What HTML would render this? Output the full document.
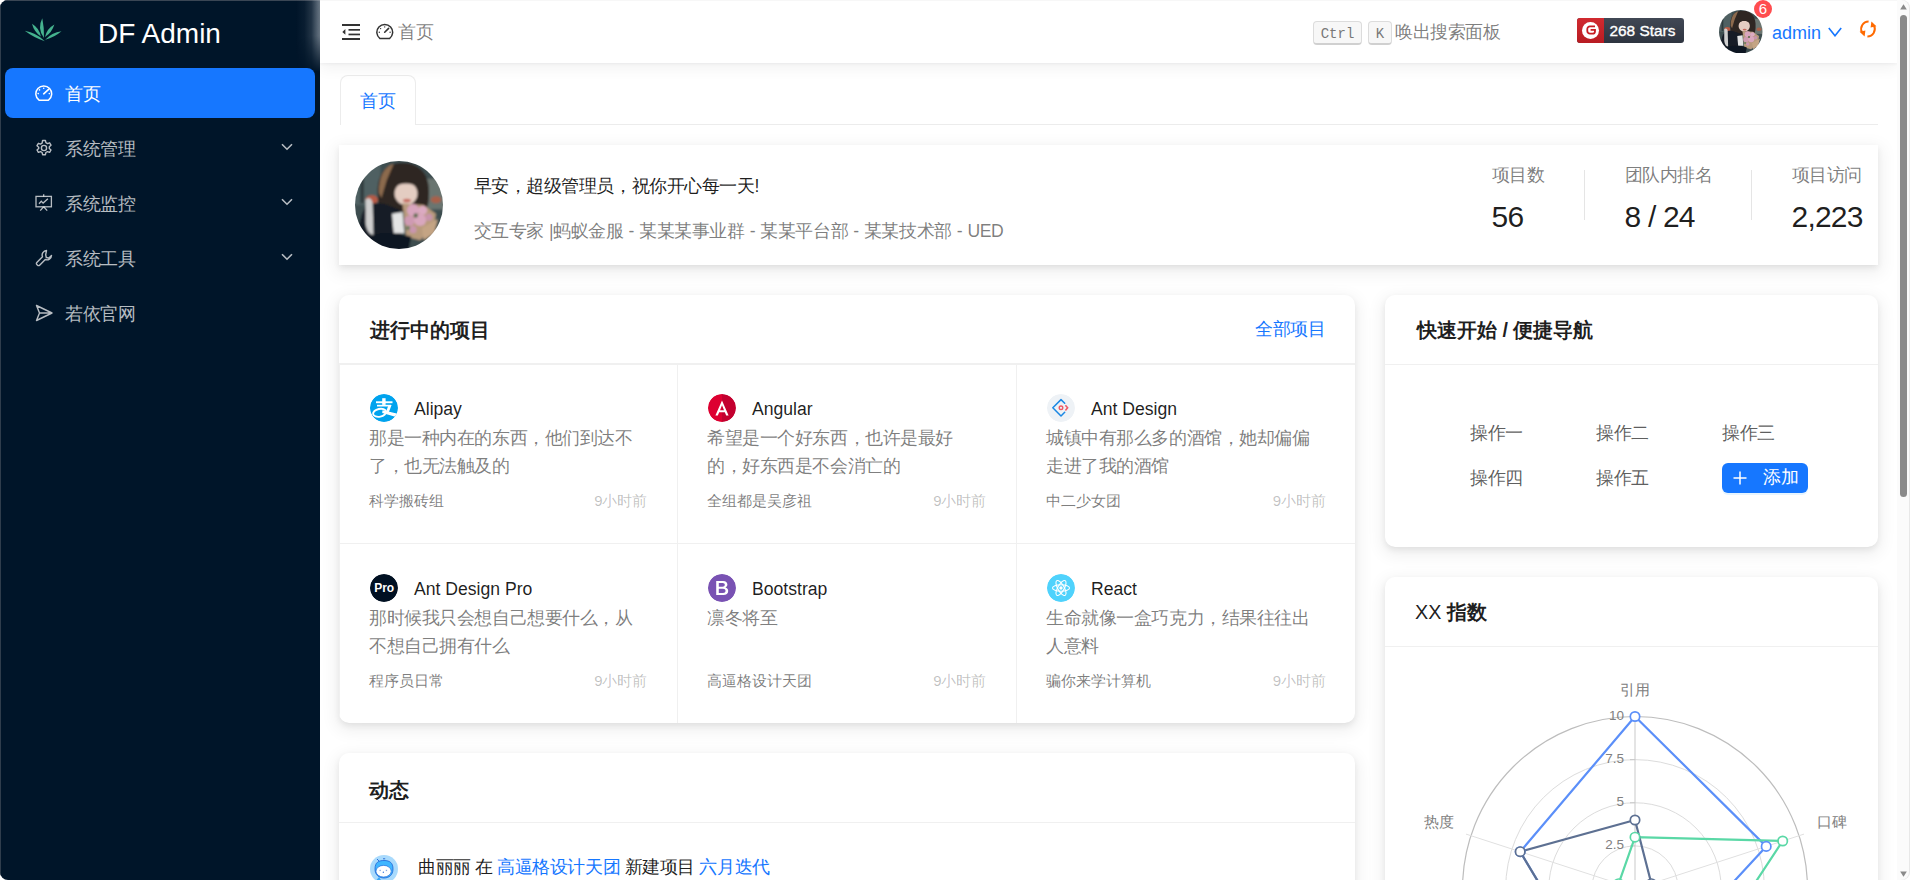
<!DOCTYPE html>
<html><head><meta charset="utf-8">
<style>
*{box-sizing:border-box;margin:0;padding:0}
html,body{width:1910px;height:880px;overflow:hidden;background:#fff}
body{position:relative;font-family:"Liberation Sans",sans-serif;color:rgba(0,0,0,.88)}
.a{position:absolute;white-space:nowrap;line-height:1}
#sb .a{position:absolute}
#side{position:absolute;left:0;top:0;width:320px;height:880px;background:#001529;border-radius:8px 0 0 8px;overflow:hidden}
#side .edge{position:absolute;left:0;top:0;width:1px;height:880px;background:#2f3d4c}
#side .tedge{position:absolute;left:0;top:0;width:320px;height:1px;background:#3a4654}
#side .topg{position:absolute;left:296px;top:0;width:24px;height:72px;background:linear-gradient(90deg,rgba(160,170,180,0) 0%,rgba(160,170,180,.06) 35%,rgba(160,170,180,.22) 65%,rgba(175,185,195,.62) 100%);-webkit-mask-image:linear-gradient(180deg,#000 0,#000 50%,transparent 100%)}
.mi{position:absolute;left:5px;width:310px;height:50px;border-radius:8px}
.mi.sel{background:#1677ff}
.mi .t{position:absolute;left:60px;top:18px;font-size:17.6px;letter-spacing:-.43px;line-height:1;color:rgba(255,255,255,.72)}
.mi.sel .t{color:#fff}
.mi svg.ic{position:absolute;left:30px;top:16px}
.mi svg.ch{position:absolute;left:276px;top:20px}
#main{position:absolute;left:320px;top:0;width:1577px;height:880px;background:#fff}
#hdr{position:absolute;left:320px;top:0;width:1577px;height:62.7px;background:#fff;box-shadow:0 1px 3px rgba(0,21,41,.05),0 6px 14px rgba(0,0,0,.05);z-index:2}
#sb{position:absolute;left:1897px;top:0;width:13px;height:880px;background:#fbfbfb;z-index:3;border-radius:0 8px 8px 0;box-shadow:inset -1px 0 0 #e8e8e8}
.card{position:absolute;background:#fff;border-radius:10px;box-shadow:0 1px 2px -2px rgba(0,0,0,.14),0 3px 6px 0 rgba(0,0,0,.07),0 5px 16px 4px rgba(0,0,0,.06)}
.ct{position:absolute;font-size:19.8px;font-weight:bold;line-height:1;color:rgba(0,0,0,.88);white-space:nowrap}
.sep{position:absolute;left:0;right:0;height:1px;background:#f0f0f0}
.gc{position:absolute;width:338.5px;height:180px}
.gc .ico{position:absolute;left:30px;top:30px;width:28px;height:28px;border-radius:50%;overflow:hidden}
.gc .nm{position:absolute;left:74px;top:37px;font-size:17.6px;line-height:1;color:rgba(0,0,0,.88);white-space:nowrap}
.gc .ds{position:absolute;left:29px;top:60px;width:278px;font-size:17.6px;letter-spacing:-.43px;line-height:28px;color:rgba(0,0,0,.52);white-space:normal}
.gc .ft{position:absolute;left:29px;top:128.5px;font-size:15px;line-height:1;color:rgba(0,0,0,.52);white-space:nowrap}
.gc .tm{position:absolute;right:30px;top:128.5px;font-size:15px;line-height:1;color:rgba(0,0,0,.25);white-space:nowrap}
.qa{position:absolute;font-size:17.6px;letter-spacing:-.43px;line-height:1;margin-top:1px;color:rgba(0,0,0,.65);white-space:nowrap}
.kbd{font-family:"Liberation Mono",monospace;font-size:14px;color:#777;background:#f7f7f7;border:1px solid #dcdcdc;border-bottom:2px solid #d0d0d0;border-radius:4px;text-align:center;line-height:25px}
.av{border-radius:50%;overflow:hidden;background:radial-gradient(circle at 50% 38%,#d9c3b8 0,#b59a8c 12%,#3a3330 26%,#2a2f30 45%,#26383c 70%,#2b3c40 100%)}
</style></head><body>
<div id="main"></div>
<svg width="0" height="0" style="position:absolute">
<defs>
<filter id="bl" x="-10%" y="-10%" width="120%" height="120%"><feGaussianBlur stdDeviation="1.3"/></filter>
<clipPath id="cc"><circle cx="50" cy="50" r="50"/></clipPath>

</defs></svg>

<!-- SIDEBAR -->
<div id="side">
  <div class="edge"></div><div class="tedge"></div>
  <div class="topg"></div>
  <svg class="a" style="left:24px;top:17px" width="38" height="26" viewBox="0 0 38 26"><g fill="#45b38f"><path d="M20.0 21.0 Q20.3 11.0 18.3 1.2 Q12.8 11.6 20.0 21.0Z"/><path d="M16.8 19.5 Q15.3 11.2 8.0 6.8 Q10.0 14.8 16.8 19.5Z"/><path d="M21.0 20.0 Q28.0 15.6 30.4 7.6 Q22.9 11.7 21.0 20.0Z"/><path d="M20.8 24.2 Q12.5 15.8 0.8 13.8 Q9.9 20.8 20.8 24.2Z"/><path d="M21.2 22.8 Q30.3 20.3 37.5 14.2 Q27.7 15.3 21.2 22.8Z"/></g></svg>
  <div class="a" style="left:98px;top:20px;font-size:28px;color:#fff">DF Admin</div>

  <div class="mi sel" style="top:68px">
    <svg class="ic" style="top:17px" width="18" height="18" viewBox="0 0 18 18" fill="none" stroke="#fff" stroke-width="1.5"><path d="M4 15.2 A7.9 7.9 0 1 1 13.5 15.2 Z" stroke-linejoin="round"/><path d="M8.7 8.8 L13.6 4.4" stroke-linecap="round" stroke-width="1.6"/><circle cx="4.5" cy="4.9" r=".8" fill="#fff" stroke="none"/><circle cx="8.7" cy="3.3" r=".8" fill="#fff" stroke="none"/><circle cx="3.2" cy="8.6" r=".8" fill="#fff" stroke="none"/><circle cx="14.3" cy="8.6" r=".8" fill="#fff" stroke="none"/></svg>
    <div class="t">首页</div>
  </div>
  <div class="mi" style="top:123px">
    <svg class="ic" width="18" height="18" viewBox="0 0 18 18" fill="none" stroke="rgba(255,255,255,.72)" stroke-width="1.4"><path d="M7.6 1.5h2.8l.5 2.2 1.6.9 2.1-.8 1.4 2.4-1.7 1.5v1.8l1.7 1.5-1.4 2.4-2.1-.8-1.6.9-.5 2.2H7.6l-.5-2.2-1.6-.9-2.1.8-1.4-2.4 1.7-1.5V8.2L2 6.7l1.4-2.4 2.1.8 1.6-.9z" stroke-linejoin="round"/><circle cx="9" cy="9" r="2.6"/></svg>
    <div class="t">系统管理</div>
    <svg class="ch" width="12" height="8" viewBox="0 0 12 8" fill="none" stroke="rgba(255,255,255,.72)" stroke-width="1.6"><path d="M1 1.2 L6 6.2 L11 1.2"/></svg>
  </div>
  <div class="mi" style="top:178px">
    <svg class="ic" style="top:16px" width="18" height="18" viewBox="0 0 18 18" fill="none" stroke="rgba(255,255,255,.72)" stroke-width="1.3"><rect x="1" y="2.4" width="15.4" height="10.4"/><path d="M8.7 0.2v2.2M8.7 12.8L5.2 16.6M8.7 12.8l3.5 3.8M4 9.8l2.3-2.5 1.8 1.8 4.8-4.3"/></svg>
    <div class="t">系统监控</div>
    <svg class="ch" width="12" height="8" viewBox="0 0 12 8" fill="none" stroke="rgba(255,255,255,.72)" stroke-width="1.6"><path d="M1 1.2 L6 6.2 L11 1.2"/></svg>
  </div>
  <div class="mi" style="top:233px">
    <svg class="ic" width="18" height="18" viewBox="0 0 18 18" fill="none" stroke="rgba(255,255,255,.72)" stroke-width="1.4"><path d="M11.5 1.5a4.5 4.5 0 0 0-4 6.2L1.8 13.4a1.4 1.4 0 0 0 0 2l.8.8a1.4 1.4 0 0 0 2 0l5.7-5.7a4.5 4.5 0 0 0 6.2-4l-2.6 2.6-2.6-.6-.6-2.6z" stroke-linejoin="round"/></svg>
    <div class="t">系统工具</div>
    <svg class="ch" width="12" height="8" viewBox="0 0 12 8" fill="none" stroke="rgba(255,255,255,.72)" stroke-width="1.6"><path d="M1 1.2 L6 6.2 L11 1.2"/></svg>
  </div>
  <div class="mi" style="top:288px">
    <svg class="ic" width="18" height="18" viewBox="0 0 18 18" fill="none" stroke="rgba(255,255,255,.72)" stroke-width="1.4"><path d="M1.5 1.5 L17 9 L1.5 16.5 L4.5 9 Z M4.5 9 H17" stroke-linejoin="round"/></svg>
    <div class="t">若依官网</div>
  </div>
</div>

<!-- HEADER -->
<div id="hdr"><div class="a" style="left:0;top:0;width:1577px;height:1px;background:#f7f7f7"></div>
  <svg class="a" style="left:22px;top:24px" width="18" height="16" viewBox="0 0 18 16"><g fill="#333"><rect x="0" y="0" width="18" height="2"/><rect x="6.5" y="5" width="11.5" height="1.7"/><rect x="6.5" y="9.6" width="11.5" height="1.7"/><rect x="0" y="14" width="18" height="2"/><path d="M0.3 7.9 L3.4 5 L3.4 10.8 Z"/></g></svg>
  <svg class="a" style="left:56px;top:23px" width="18" height="18" viewBox="0 0 18 18" fill="none" stroke="#333" stroke-width="1.5"><path d="M4 15.6 A7.9 7.9 0 1 1 13.5 15.6 Z" stroke-linejoin="round"/><path d="M8.7 9.2 L12.6 5.4" stroke-linecap="round" stroke-width="1.6"/><circle cx="4.6" cy="5.6" r=".7" fill="#333" stroke="none"/><circle cx="8.7" cy="3.9" r=".7" fill="#333" stroke="none"/><circle cx="3.3" cy="9.2" r=".7" fill="#333" stroke="none"/><circle cx="14.1" cy="9.2" r=".7" fill="#333" stroke="none"/></svg>
  <div class="a" style="left:78px;top:24px;font-size:17.6px;letter-spacing:-.43px;color:rgba(0,0,0,.52)">首页</div>

  <div class="a kbd" style="left:993px;top:21px;width:49px;height:24px">Ctrl</div>
  <div class="a kbd" style="left:1048px;top:21px;width:24px;height:24px">K</div>
  <div class="a" style="left:1075px;top:24px;font-size:17.6px;letter-spacing:-.43px;color:rgba(0,0,0,.52)">唤出搜索面板</div>

  <div class="a" style="left:1257px;top:18px;width:107px;height:24.5px;border-radius:3px;overflow:hidden;background:linear-gradient(#414855,#2e3440)">
    <div style="position:absolute;left:0;top:0;width:27px;height:100%;background:linear-gradient(#d12a30,#b81c22)"></div>
    <div style="position:absolute;left:5px;top:3.6px;width:17.2px;height:17.2px;border-radius:50%;background:#fff"></div>
    <svg style="position:absolute;left:8.5px;top:7px" width="10" height="10" viewBox="0 0 10 10"><path d="M9 1.3 H4 A2.7 2.7 0 0 0 1.3 4 V6 A2.7 2.7 0 0 0 4 8.7 H6.5 A2.5 2.5 0 0 0 9 6.2 V4.8 H4.6" fill="none" stroke="#c71d23" stroke-width="1.8"/></svg>
    <div style="position:absolute;left:32.5px;top:5px;font-size:15.4px;line-height:1;-webkit-text-stroke:.35px #fff;color:#fff;white-space:nowrap">268 Stars</div>
  </div>

  <svg class="a" style="left:1399px;top:9.5px" width="43.5" height="43.5" viewBox="0 0 100 100">
<g clip-path="url(#cc)"><g filter="url(#bl)">
<rect x="-5" y="-5" width="110" height="110" fill="#3c4d50"/>
<rect x="-5" y="-5" width="34" height="55" fill="#4f6062"/>
<rect x="6" y="8" width="4" height="40" fill="#2e3a3c"/>
<rect x="80" y="20" width="25" height="35" fill="#6a7470"/>
<ellipse cx="19" cy="44" rx="7" ry="5" fill="#b85a44"/>
<ellipse cx="92" cy="44" rx="6" ry="4" fill="#a86048"/>
<path d="M26 40 C24 15 36 2 54 2 C74 2 86 16 84 40 C84 52 80 58 74 58 L34 58 C28 56 26 50 26 40Z" fill="#2f2623"/>
<path d="M27 36 C27 18 33 6 44 3 L36 22 L30 42 Z" fill="#8c6a4e"/>
<ellipse cx="58" cy="37" rx="13" ry="13" fill="#e4cdc2"/>
<path d="M42 28 C46 18 66 16 74 26 L72 30 C64 24 52 24 44 30 Z" fill="#2f2623"/>
<ellipse cx="59" cy="45" rx="4.5" ry="2" fill="#c6685c"/>
<path d="M8 60 C14 44 30 46 42 52 L52 56 L54 100 L-5 105 Z" fill="#151c26"/>
<path d="M12 44 C15 41 19 42 20 48 L21 84 C17 84 13 80 12 70 Z" fill="#cfcfcf"/>
<path d="M42 60 L54 58 L56 82 L44 82 Z" fill="#e4e4e4"/>
<path d="M54 48 L78 50 L92 60 L90 74 L74 90 L58 86 Z" fill="#b89a7c"/>
<circle cx="66" cy="56" r="7" fill="#d8a5bd"/>
<circle cx="77" cy="56" r="5" fill="#dcaac2"/>
<circle cx="62" cy="68" r="6" fill="#cf9ab2"/>
<circle cx="74" cy="67" r="7" fill="#d9a7be"/>
<circle cx="84" cy="64" r="4" fill="#c894ad"/>
<circle cx="66" cy="78" r="4" fill="#c996ae"/>
<circle cx="69" cy="62" r="2.5" fill="#5e6c50"/>
<circle cx="60" cy="76" r="2.5" fill="#6f7e60"/>
<path d="M20 84 C30 80 50 82 64 86 L60 105 L10 105 Z" fill="#111821"/>
<path d="M76 76 L94 66 L90 82 L78 90 Z" fill="#c4a484"/>
</g></g>
</svg>
  <div class="a" style="left:1434px;top:0px;width:18px;height:18px;border-radius:50%;background:#ff4d4f;color:#fff;font-size:15px;line-height:18px;text-align:center;box-shadow:0 0 0 1px #fff">6</div>
  <div class="a" style="left:1452px;top:23.5px;font-size:18px;color:#1677ff">admin</div>
  <svg class="a" style="left:1508px;top:27px" width="14" height="10" viewBox="0 0 14 10" fill="none" stroke="#1677ff" stroke-width="1.6"><path d="M0.8 1 L7 8.8 L13.2 1"/></svg>
  <svg class="a" style="left:1538px;top:19px" width="20" height="20" viewBox="0 0 20 20" fill="none" stroke="#ff6a00" stroke-width="2"><path d="M10.6 2.6 A7.4 7.4 0 0 0 3.9 13.2"/><path d="M9.4 17.4 A7.4 7.4 0 0 0 16.1 6.8"/><path d="M1.6 12.8 L7.4 11.6 L6.6 17.6 Z" fill="#ff6a00" stroke="none"/><path d="M18.4 7.2 L12.6 8.4 L13.4 2.4 Z" fill="#ff6a00" stroke="none"/></svg>
</div>


<!-- TAB -->
<div class="a" style="left:340px;top:124px;width:1538px;height:1px;background:#ececec"></div>
<div class="a" style="left:339.5px;top:75px;width:76.5px;height:50px;background:#fff;border:1px solid #ececec;border-bottom:none;border-radius:8px 8px 0 0"></div>
<div class="a" style="left:360px;top:92.5px;font-size:17.6px;letter-spacing:-.43px;color:#1677ff">首页</div>

<!-- PROFILE CARD -->
<div class="card" style="left:339px;top:145px;width:1539px;height:120px;border-radius:0">
  <svg class="a" style="left:16px;top:15.5px" width="88" height="88" viewBox="0 0 100 100">
<g clip-path="url(#cc)"><g filter="url(#bl)">
<rect x="-5" y="-5" width="110" height="110" fill="#3c4d50"/>
<rect x="-5" y="-5" width="34" height="55" fill="#4f6062"/>
<rect x="6" y="8" width="4" height="40" fill="#2e3a3c"/>
<rect x="80" y="20" width="25" height="35" fill="#6a7470"/>
<ellipse cx="19" cy="44" rx="7" ry="5" fill="#b85a44"/>
<ellipse cx="92" cy="44" rx="6" ry="4" fill="#a86048"/>
<path d="M26 40 C24 15 36 2 54 2 C74 2 86 16 84 40 C84 52 80 58 74 58 L34 58 C28 56 26 50 26 40Z" fill="#2f2623"/>
<path d="M27 36 C27 18 33 6 44 3 L36 22 L30 42 Z" fill="#8c6a4e"/>
<ellipse cx="58" cy="37" rx="13" ry="13" fill="#e4cdc2"/>
<path d="M42 28 C46 18 66 16 74 26 L72 30 C64 24 52 24 44 30 Z" fill="#2f2623"/>
<ellipse cx="59" cy="45" rx="4.5" ry="2" fill="#c6685c"/>
<path d="M8 60 C14 44 30 46 42 52 L52 56 L54 100 L-5 105 Z" fill="#151c26"/>
<path d="M12 44 C15 41 19 42 20 48 L21 84 C17 84 13 80 12 70 Z" fill="#cfcfcf"/>
<path d="M42 60 L54 58 L56 82 L44 82 Z" fill="#e4e4e4"/>
<path d="M54 48 L78 50 L92 60 L90 74 L74 90 L58 86 Z" fill="#b89a7c"/>
<circle cx="66" cy="56" r="7" fill="#d8a5bd"/>
<circle cx="77" cy="56" r="5" fill="#dcaac2"/>
<circle cx="62" cy="68" r="6" fill="#cf9ab2"/>
<circle cx="74" cy="67" r="7" fill="#d9a7be"/>
<circle cx="84" cy="64" r="4" fill="#c894ad"/>
<circle cx="66" cy="78" r="4" fill="#c996ae"/>
<circle cx="69" cy="62" r="2.5" fill="#5e6c50"/>
<circle cx="60" cy="76" r="2.5" fill="#6f7e60"/>
<path d="M20 84 C30 80 50 82 64 86 L60 105 L10 105 Z" fill="#111821"/>
<path d="M76 76 L94 66 L90 82 L78 90 Z" fill="#c4a484"/>
</g></g>
</svg>
  <div class="a" style="left:134.5px;top:33px;font-size:17.6px;letter-spacing:-.43px;color:rgba(0,0,0,.88)">早安，超级管理员，祝你开心每一天!</div>
  <div class="a" style="left:134.5px;top:77.5px;font-size:17.6px;letter-spacing:-.43px;word-spacing:.7px;color:rgba(0,0,0,.52)">交互专家 |蚂蚁金服 - 某某某事业群 - 某某平台部 - 某某技术部 - UED</div>
  <div class="a" style="left:1152.5px;top:22px;font-size:17.6px;letter-spacing:-.43px;color:rgba(0,0,0,.52)">项目数</div>
  <div class="a" style="left:1152.5px;top:57px;font-size:30px;letter-spacing:-.8px;color:rgba(0,0,0,.88)">56</div>
  <div class="a" style="left:1245px;top:25px;width:1px;height:50px;background:#e5e5e5"></div>
  <div class="a" style="left:1285.5px;top:22px;font-size:17.6px;letter-spacing:-.43px;color:rgba(0,0,0,.52)">团队内排名</div>
  <div class="a" style="left:1285.5px;top:57px;font-size:30px;letter-spacing:-.8px;color:rgba(0,0,0,.88)">8 / 24</div>
  <div class="a" style="left:1412px;top:25px;width:1px;height:50px;background:#e5e5e5"></div>
  <div class="a" style="left:1452.5px;top:22px;font-size:17.6px;letter-spacing:-.43px;color:rgba(0,0,0,.52)">项目访问</div>
  <div class="a" style="left:1452.5px;top:57px;font-size:30px;letter-spacing:-.8px;color:rgba(0,0,0,.88)">2,223</div>
</div>


<!-- PROJECT CARD -->
<div class="card" style="left:339px;top:295px;width:1016px;height:428px;overflow:hidden">
  <div class="ct" style="left:31px;top:26px">进行中的项目</div>
  <div class="a" style="left:916px;top:26px;font-size:17.6px;letter-spacing:-.43px;color:#1677ff">全部项目</div>
  <div class="sep" style="top:68px;height:1.6px"></div>
  <div class="gc" style="left:1px;top:69px;width:337.5px"><div class="ico"><svg width="28" height="28" viewBox="0 0 28 28"><defs><clipPath id="alc"><circle cx="14" cy="14" r="14"/></clipPath></defs><circle cx="14" cy="14" r="14" fill="#00a3ee"/><g fill="#fff" clip-path="url(#alc)"><rect x="6" y="7.3" width="16.5" height="1.9"/><rect x="12.2" y="4.2" width="3.4" height="6.7"/><rect x="7" y="10.8" width="14" height="1.7"/><path d="M18.6 10.9 H21.6 L18.8 18.2 H15.8 Z"/><path d="M12.5 16.2 C17 17.2 22 18.4 29 20 L29 23.6 C22 21.8 17 20.4 12.2 19 Z"/></g><ellipse cx="9.6" cy="18.8" rx="6.6" ry="3.9" transform="rotate(-12 9.6 18.8)" fill="none" stroke="#fff" stroke-width="1.9"/></svg></div><div class="nm">Alipay</div><div class="ds">那是一种内在的东西，他们到达不了，也无法触及的</div><div class="ft">科学搬砖组</div><div class="tm">9小时前</div></div>
  <div class="gc" style="left:339px;top:69px;width:338.5px"><div class="ico"><svg width="28" height="28" viewBox="0 0 28 28"><path d="M14 0 A14 14 0 0 0 14 28 Z" fill="#dd0031"/><path d="M14 0 A14 14 0 0 1 14 28 Z" fill="#c3002f"/><path d="M14 6.5 L20.6 21.6 H18.2 L16.8 18.2 H11.2 L9.8 21.6 H7.4 Z M12 16.2 H16 L14 11.2 Z" fill="#fff" fill-rule="evenodd"/></svg></div><div class="nm">Angular</div><div class="ds">希望是一个好东西，也许是最好的，好东西是不会消亡的</div><div class="ft">全组都是吴彦祖</div><div class="tm">9小时前</div></div>
  <div class="gc" style="left:678px;top:69px;width:339px"><div class="ico"><svg width="28" height="28" viewBox="0 0 28 28"><circle cx="14" cy="14" r="14" fill="#eef2f6"/><path d="M17.7 9.2 L14 5.6 L5.8 13.8 L14 22 L17.7 18.3" fill="none" stroke="#1a87e3" stroke-width="1.5" stroke-linecap="round" stroke-linejoin="round"/><circle cx="14" cy="13.8" r="1.8" fill="none" stroke="#ee5a66" stroke-width="1.4"/><path d="M18.4 11.2 L20.6 13.8 L18.4 16.4" fill="none" stroke="#ee5a66" stroke-width="1.6"/></svg></div><div class="nm">Ant Design</div><div class="ds">城镇中有那么多的酒馆，她却偏偏走进了我的酒馆</div><div class="ft">中二少女团</div><div class="tm">9小时前</div></div>
  <div class="gc" style="left:1px;top:249px;width:337.5px"><div class="ico"><svg width="28" height="28" viewBox="0 0 28 28"><circle cx="14" cy="14" r="14" fill="#001022"/><text x="14.2" y="18.3" text-anchor="middle" font-family="Liberation Sans" font-weight="bold" font-size="12" fill="#fff">Pro</text></svg></div><div class="nm">Ant Design Pro</div><div class="ds">那时候我只会想自己想要什么，从不想自己拥有什么</div><div class="ft">程序员日常</div><div class="tm">9小时前</div></div>
  <div class="gc" style="left:339px;top:249px;width:338.5px"><div class="ico"><svg width="28" height="28" viewBox="0 0 28 28"><circle cx="14" cy="14" r="14" fill="#7952b3"/><path d="M8.2 6.9 H15 C18 6.9 19.4 8.4 19.4 10.6 C19.4 12 18.6 13.1 17.4 13.5 C19.2 13.9 20.2 15.2 20.2 17 C20.2 19.5 18.4 21.1 15.3 21.1 H8.2 Z M10.8 9 V12.7 H14.5 C16 12.7 16.8 12 16.8 10.8 C16.8 9.7 16 9 14.6 9 Z M10.8 14.7 V19 H15 C16.6 19 17.5 18.2 17.5 16.8 C17.5 15.5 16.6 14.7 15 14.7 Z" fill="#fff" fill-rule="evenodd"/></svg></div><div class="nm">Bootstrap</div><div class="ds">凛冬将至</div><div class="ft">高逼格设计天团</div><div class="tm">9小时前</div></div>
  <div class="gc" style="left:678px;top:249px;width:339px"><div class="ico"><svg width="28" height="28" viewBox="0 0 28 28"><circle cx="14" cy="14" r="14" fill="#4fd2fc"/><g fill="none" stroke="#fff" stroke-width="1.1"><ellipse cx="14" cy="14" rx="8.5" ry="3.2"/><ellipse cx="14" cy="14" rx="8.5" ry="3.2" transform="rotate(60 14 14)"/><ellipse cx="14" cy="14" rx="8.5" ry="3.2" transform="rotate(120 14 14)"/></g><circle cx="14" cy="14" r="1.7" fill="#fff"/></svg></div><div class="nm">React</div><div class="ds">生命就像一盒巧克力，结果往往出人意料</div><div class="ft">骗你来学计算机</div><div class="tm">9小时前</div></div>
  <div class="a" style="left:338px;top:69px;width:1px;height:360px;background:#f0f0f0"></div><div class="a" style="left:0;top:69px;width:1px;height:360px;background:#f0f0f0"></div>
  <div class="a" style="left:677px;top:69px;width:1px;height:360px;background:#f0f0f0"></div>
  <div class="a" style="left:0;top:248px;width:1016px;height:1px;background:#f0f0f0"></div>
</div>

<!-- QUICK NAV -->
<div class="card" style="left:1385px;top:295px;width:493px;height:251.5px">
  <div class="ct" style="left:32px;top:26px">快速开始 / 便捷导航</div>
  <div class="sep" style="top:68.5px"></div>
  <div class="qa" style="left:85px;top:129px">操作一</div>
  <div class="qa" style="left:211px;top:129px">操作二</div>
  <div class="qa" style="left:337px;top:129px">操作三</div>
  <div class="qa" style="left:85px;top:174px">操作四</div>
  <div class="qa" style="left:211px;top:174px">操作五</div>
  <div class="a" style="left:337px;top:167.5px;width:86px;height:30px;border-radius:6px;background:#1677ff;box-shadow:0 2px 0 rgba(5,145,255,.1)">
    <svg style="position:absolute;left:11px;top:8px" width="14" height="14" viewBox="0 0 14 14"><path d="M7 0.5V13.5M0.5 7H13.5" stroke="#fff" stroke-width="1.5"/></svg>
    <div style="position:absolute;left:41px;top:6.5px;font-size:17.6px;letter-spacing:-.43px;line-height:1;color:#fff;white-space:nowrap">添加</div>
  </div>
</div>

<!-- XX CARD -->
<div class="card" style="left:1385px;top:577px;width:493px;height:400px">
  <div class="ct" style="left:30px;top:26px"><span style="font-weight:normal">XX</span> 指数</div>
  <div class="sep" style="top:68.5px"></div>
</div>

<!-- DYNAMIC CARD -->
<div class="card" style="left:339px;top:753px;width:1016px;height:300px">
  <div class="ct" style="left:30px;top:28px">动态</div>
  <div class="sep" style="top:69px"></div>
  <svg class="a" style="left:31px;top:102px" width="28" height="28" viewBox="0 0 28 28"><circle cx="14" cy="14" r="14" fill="#a9dafc"/><path d="M5 14 C5 7 9 5.5 14 5.5 C20 5.5 23 8 23 14 C23 20 19 23 14 23 C9 23 5 20 5 14Z" fill="#3fb6ff" stroke="#1d63d6" stroke-width=".8"/><ellipse cx="13.6" cy="16.2" rx="7.6" ry="5.8" fill="#fff" stroke="#1d63d6" stroke-width=".6"/><rect x="9.5" y="14.8" width="1.3" height="1.3" fill="#8aa8e0"/><rect x="15.8" y="14.8" width="1.3" height="1.3" fill="#8aa8e0"/><ellipse cx="13.3" cy="17.2" rx=".6" ry=".8" fill="#1d63d6"/><path d="M7 4 L9 6" stroke="#1d63d6" stroke-width=".9"/><path d="M13 3.8 H15.2" stroke="#1d63d6" stroke-width=".9"/><path d="M4 28 L9 22 L13 28Z" fill="#3aa8f8"/></svg>
  <div class="a" style="left:79px;top:105.5px;font-size:17.6px;letter-spacing:-.43px;color:rgba(0,0,0,.88)">曲丽丽 在 <span style="color:#1677ff">高逼格设计天团</span> 新建项目 <span style="color:#1677ff">六月迭代</span></div>
</div>

<!-- SCROLLBAR -->
<!-- RADAR -->
<svg class="a" style="left:0;top:0;z-index:1" width="1910" height="880" viewBox="0 0 1910 880">
<circle cx="1635" cy="889" r="43.125" fill="none" stroke="#dcdcdc" stroke-width="1"/>
<circle cx="1635" cy="889" r="86.25" fill="none" stroke="#dcdcdc" stroke-width="1"/>
<circle cx="1635" cy="889" r="129.375" fill="none" stroke="#dcdcdc" stroke-width="1"/>
<circle cx="1635" cy="889" r="172.5" fill="none" stroke="#bdbdbd" stroke-width="1.2"/>
<line x1="1635" y1="889" x2="1635.0" y2="711.3" stroke="#c9c9c9" stroke-width="1"/>
<line x1="1635" y1="889" x2="1804.0" y2="834.1" stroke="#e0e0e0" stroke-width="1"/>
<line x1="1635" y1="889" x2="1739.4" y2="1032.7" stroke="#e0e0e0" stroke-width="1"/>
<line x1="1635" y1="889" x2="1530.6" y2="1032.7" stroke="#e0e0e0" stroke-width="1"/>
<line x1="1635" y1="889" x2="1466.0" y2="834.1" stroke="#e0e0e0" stroke-width="1"/>
<line x1="1630" y1="845.875" x2="1635" y2="845.875" stroke="#c9c9c9" stroke-width="1"/>
<text x="1624" y="849.175" text-anchor="end" font-family="Liberation Sans" font-size="13.5" fill="#808080">2.5</text>
<line x1="1630" y1="802.75" x2="1635" y2="802.75" stroke="#c9c9c9" stroke-width="1"/>
<text x="1624" y="806.05" text-anchor="end" font-family="Liberation Sans" font-size="13.5" fill="#808080">5</text>
<line x1="1630" y1="759.625" x2="1635" y2="759.625" stroke="#c9c9c9" stroke-width="1"/>
<text x="1624" y="762.925" text-anchor="end" font-family="Liberation Sans" font-size="13.5" fill="#808080">7.5</text>
<line x1="1630" y1="716.5" x2="1635" y2="716.5" stroke="#c9c9c9" stroke-width="1"/>
<text x="1624" y="719.8" text-anchor="end" font-family="Liberation Sans" font-size="13.5" fill="#808080">10</text>
<polygon points="1635.0,716.5 1766.2,846.4 1675.6,944.8 1584.3,958.8 1520.2,851.7" fill="none" stroke="#5B8FF9" stroke-width="2.2" stroke-linejoin="round"/>
<polygon points="1635.0,837.2 1782.7,841.0 1695.8,972.7 1594.4,944.8 1618.6,883.7" fill="none" stroke="#5AD8A6" stroke-width="2.2" stroke-linejoin="round"/>
<polygon points="1635.0,820.0 1651.4,883.7 1665.4,930.9 1584.3,958.8 1520.2,851.7" fill="none" stroke="#5D7092" stroke-width="2.2" stroke-linejoin="round"/>
<circle cx="1635.0" cy="716.5" r="4.7" fill="#fff" stroke="#5B8FF9" stroke-width="1.7"/>
<circle cx="1766.2" cy="846.4" r="4.7" fill="#fff" stroke="#5B8FF9" stroke-width="1.7"/>
<circle cx="1675.6" cy="944.8" r="4.7" fill="#fff" stroke="#5B8FF9" stroke-width="1.7"/>
<circle cx="1584.3" cy="958.8" r="4.7" fill="#fff" stroke="#5B8FF9" stroke-width="1.7"/>
<circle cx="1520.2" cy="851.7" r="4.7" fill="#fff" stroke="#5B8FF9" stroke-width="1.7"/>
<circle cx="1635.0" cy="837.2" r="4.7" fill="#fff" stroke="#5AD8A6" stroke-width="1.7"/>
<circle cx="1782.7" cy="841.0" r="4.7" fill="#fff" stroke="#5AD8A6" stroke-width="1.7"/>
<circle cx="1695.8" cy="972.7" r="4.7" fill="#fff" stroke="#5AD8A6" stroke-width="1.7"/>
<circle cx="1594.4" cy="944.8" r="4.7" fill="#fff" stroke="#5AD8A6" stroke-width="1.7"/>
<circle cx="1618.6" cy="883.7" r="4.7" fill="#fff" stroke="#5AD8A6" stroke-width="1.7"/>
<circle cx="1635.0" cy="820.0" r="4.7" fill="#fff" stroke="#5D7092" stroke-width="1.7"/>
<circle cx="1651.4" cy="883.7" r="4.7" fill="#fff" stroke="#5D7092" stroke-width="1.7"/>
<circle cx="1665.4" cy="930.9" r="4.7" fill="#fff" stroke="#5D7092" stroke-width="1.7"/>
<circle cx="1584.3" cy="958.8" r="4.7" fill="#fff" stroke="#5D7092" stroke-width="1.7"/>
<circle cx="1520.2" cy="851.7" r="4.7" fill="#fff" stroke="#5D7092" stroke-width="1.7"/>
</svg>
<div class="a" style="left:1620px;top:681.5px;font-size:15px;color:#808080">引用</div>
<div class="a" style="left:1423.5px;top:813.5px;font-size:15px;color:#808080">热度</div>
<div class="a" style="left:1816.5px;top:813.5px;font-size:15px;color:#808080">口碑</div>
<div id="sb">
  <svg class="a" style="left:3px;top:4px" width="7" height="6" viewBox="0 0 7 6"><path d="M3.5 0.3 L6.8 5.6 H0.2 Z" fill="#8a8a8a"/></svg>
  <div class="a" style="left:3px;top:15px;width:7px;height:482px;border-radius:3.5px;background:#8a8a8a"></div>
  <svg class="a" style="left:3px;top:871px" width="7" height="6" viewBox="0 0 7 6"><path d="M3.5 5.7 L6.8 0.4 H0.2 Z" fill="#8a8a8a"/></svg>
</div>

</body></html>
